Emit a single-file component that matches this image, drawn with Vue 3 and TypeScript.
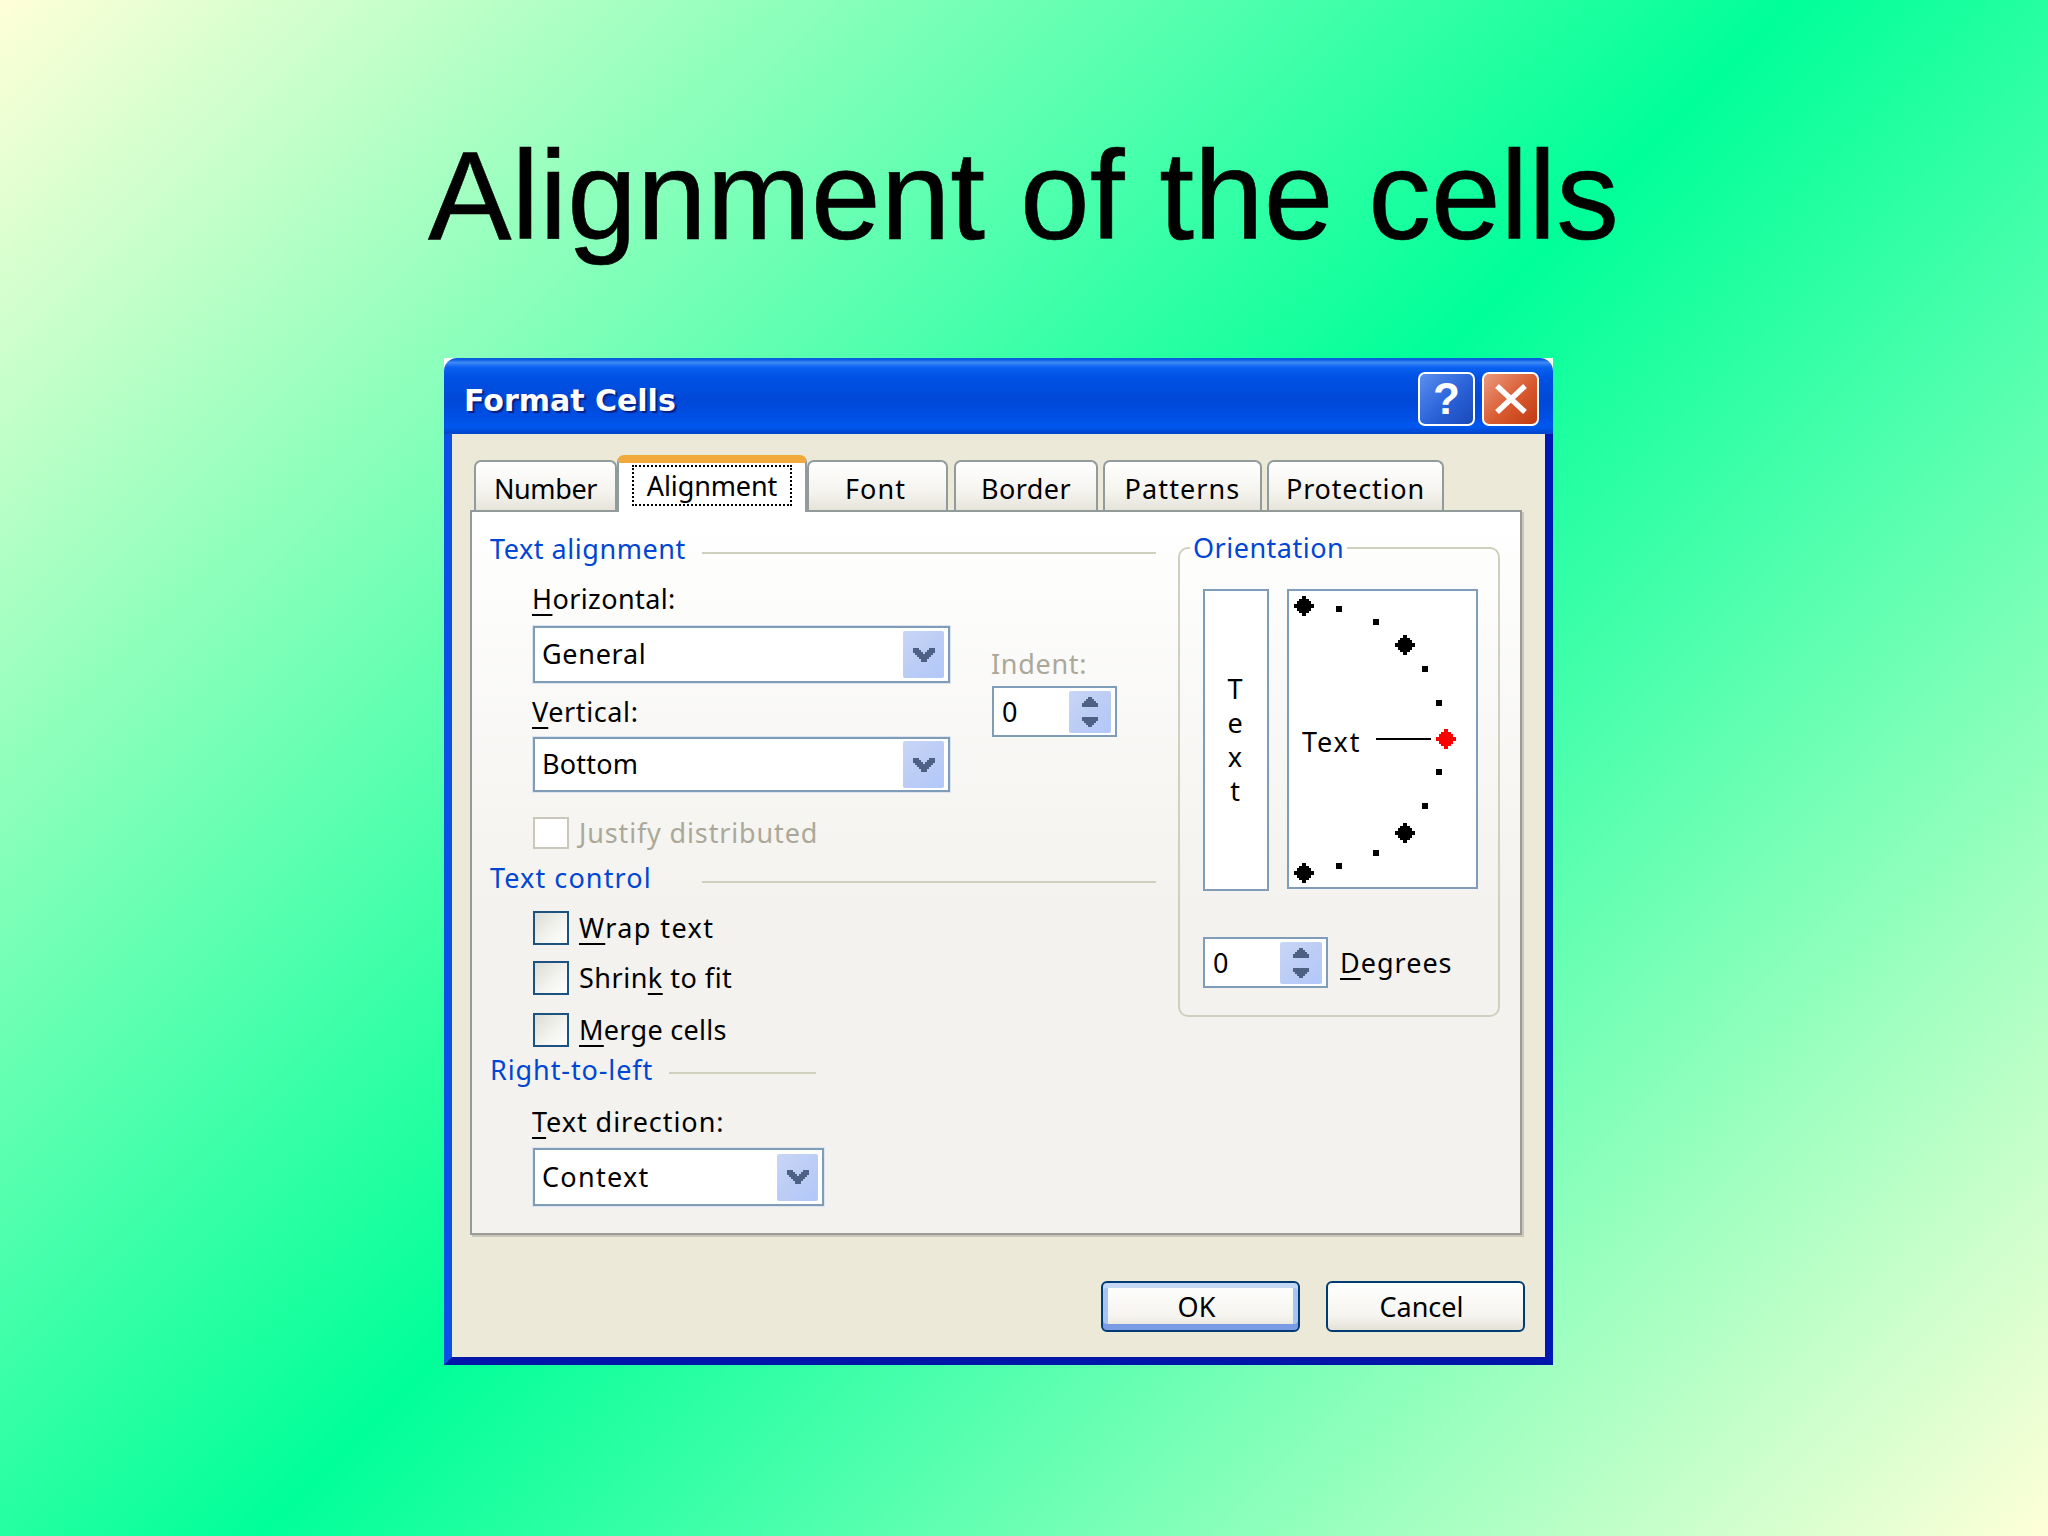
<script setup lang="ts">
interface Tab { label: string; width: number; gap: number; spacing: number; shift?: number; active?: boolean }
const tabs: Tab[] = [
  { label: 'Number', width: 143, gap: 0, spacing: -0.4 },
  { label: 'Alignment', width: 190, gap: 0, spacing: -0.1, active: true },
  { label: 'Font', width: 141, gap: 6, spacing: 1, shift: 4 },
  { label: 'Border', width: 144, gap: 5, spacing: 0.4 },
  { label: 'Patterns', width: 159, gap: 5, spacing: 1.1 },
  { label: 'Protection', width: 177, gap: 0, spacing: 0.8 },
]
const diamonds = [
  { x: 15, y: 15, fill: '#000' },
  { x: 116, y: 54, fill: '#000' },
  { x: 157, y: 148, fill: '#f00' },
  { x: 116, y: 242, fill: '#000' },
  { x: 15, y: 282, fill: '#000' },
]
const dots = [
  [50, 18], [87, 31], [136, 78], [150, 112], [150, 181], [136, 215], [87, 262], [50, 275],
]
const diamondPath = 'M-2-10H2V-7H5V-5H7V-2H10V2H7V5H5V7H2V10H-2V7H-5V5H-7V2H-10V-2H-7V-5H-5V-7H-2Z'
const chevronPath = 'M1 1H7V3H9V5H11V7H13V5H15V3H17V1H23V6H21V8H19V10H17V12H15V15H9V12H7V10H5V8H3V6H1Z'
const spinPath = 'M10 3H14V5H16V7H18V9H20V13H4V9H6V7H8V5H10ZM4 23H20V27H18V29H16V31H14V33H10V31H8V29H6V27H4Z'
const verticalText = ['T', 'e', 'x', 't']
</script>

<template>
  <div class="page">
    <h1 class="title">Alignment of the cells</h1>
    <div class="window">
      <div class="titlebar">
        <span class="caption">Format Cells</span>
        <div class="controls">
          <div class="ctl help">?</div>
          <div class="ctl close">
            <svg width="34" height="32" viewBox="0 0 34 32"><path d="M3 3 31 29M31 3 3 29" stroke="#fff" stroke-width="5.5" fill="none" /></svg>
          </div>
        </div>
      </div>
      <div class="body">
        <div class="tabs">
          <div
            v-for="t in tabs"
            :key="t.label"
            class="tab"
            :class="{ active: t.active }"
            :style="{ width: t.width + 'px', marginRight: t.gap + 'px', letterSpacing: t.spacing + 'px', paddingRight: (t.shift ?? 0) + 'px' }"
          >
            <span :class="{ focus: t.active }">{{ t.label }}</span>
          </div>
        </div>
        <div class="panel">
          <div class="left">
            <div class="section first"><span class="sec-label">Text alignment</span><span class="rule"></span></div>
            <div class="label horizontal"><u>H</u>orizontal:</div>
            <div class="align-row">
              <div class="combos">
                <div class="combo general">
                  <span class="combo-text">General</span>
                  <span class="drop"><svg width="24" height="16" viewBox="0 0 24 16"><path :d="chevronPath" fill="#4d6185" /></svg></span>
                </div>
                <div class="label vertical"><u>V</u>ertical:</div>
                <div class="combo bottom">
                  <span class="combo-text">Bottom</span>
                  <span class="drop"><svg width="24" height="16" viewBox="0 0 24 16"><path :d="chevronPath" fill="#4d6185" /></svg></span>
                </div>
              </div>
              <div class="indent">
                <div class="label disabled">Indent:</div>
                <div class="spin indent-spin">
                  <span class="spin-val">0</span>
                  <span class="spin-btn">
                    <svg width="24" height="36" viewBox="0 0 24 36"><path :d="spinPath" fill="#4d6185" /></svg>
                  </span>
                </div>
              </div>
            </div>
            <div class="check justify"><span class="box off"></span><span class="disabled">Justify distributed</span></div>
            <div class="section control"><span class="sec-label">Text control</span><span class="rule"></span></div>
            <div class="check wrap"><span class="box"></span><span><u>W</u>rap text</span></div>
            <div class="check shrink"><span class="box"></span><span>Shrin<u>k</u> to fit</span></div>
            <div class="check merge"><span class="box"></span><span><u>M</u>erge cells</span></div>
            <div class="section rtl"><span class="sec-label">Right-to-left</span><span class="rule"></span></div>
            <div class="label direction"><u>T</u>ext direction:</div>
            <div class="combo context">
              <span>Context</span>
              <span class="drop"><svg width="24" height="16" viewBox="0 0 24 16"><path :d="chevronPath" fill="#4d6185" /></svg></span>
            </div>
          </div>
          <fieldset class="orient">
            <legend class="legend">Orientation</legend>
            <div class="orient-row">
              <div class="vtext"><span v-for="(c, i) in verticalText" :key="i">{{ c }}</span></div>
              <div class="dial">
                <svg width="187" height="296" viewBox="0 0 187 296">
                  <rect v-for="(d, i) in dots" :key="i" :x="d[0] - 3" :y="d[1] - 3" width="6" height="6" fill="#000" />
                  <path v-for="(d, i) in diamonds" :key="'d' + i" :d="diamondPath" :fill="d.fill" :transform="`translate(${d.x} ${d.y})`" />
                  <line x1="87" y1="148" x2="142" y2="148" stroke="#000" stroke-width="2" />
                  <text class="dial-text" x="13" y="161">Text</text>
                </svg>
              </div>
            </div>
            <div class="degrees">
              <div class="spin deg-spin">
                <span class="spin-val">0</span>
                <span class="spin-btn">
                  <svg width="24" height="36" viewBox="0 0 24 36"><path :d="spinPath" fill="#4d6185" /></svg>
                </span>
              </div>
              <span class="deg-label"><u>D</u>egrees</span>
            </div>
          </fieldset>
        </div>
        <div class="actions">
          <div class="btn default"><span>OK</span></div>
          <div class="btn"><span>Cancel</span></div>
        </div>
      </div>
    </div>
  </div>
</template>

<style>
html, body { margin: 0; padding: 0; }
</style>

<style scoped>
.page {
  width: 2048px;
  height: 1536px;
  box-sizing: border-box;
  padding-top: 121px;
  overflow: hidden;
  background: linear-gradient(135deg, #ffffd8 0%, #00ff99 50%, #ffffd8 100%);
  font-family: "Noto Sans", "DejaVu Sans", sans-serif;
  font-size: 27px;
  line-height: 34px;
  color: #000;
}
.title {
  margin: 0 0 87px 428px;
  font-family: "Liberation Sans", Arial, sans-serif;
  font-weight: 400;
  font-size: 125.3px;
  line-height: 150px;
  white-space: nowrap;
  color: #000;
  -webkit-text-stroke: 0.6px #000;
}
.window {
  margin-left: 444px;
  width: 1109px;
  height: 1007px;
  display: flex;
  flex-direction: column;
  background: linear-gradient(#fff 0 14px, transparent 14px);
}
.titlebar {
  height: 76px;
  flex: none;
  display: flex;
  align-items: flex-start;
  justify-content: space-between;
  box-sizing: border-box;
  border-radius: 13px 13px 0 0;
  background: linear-gradient(#0a5ce0 0, #0a5ce0 2%, #3d8af7 6%, #0a62f0 12%, #0052e4 25%, #0048d8 55%, #0050e6 80%, #0058ee 90%, #0044cc 100%);
}
.caption {
  margin: 25px 0 0 20px;
  font-family: "DejaVu Sans", sans-serif;
  font-weight: 700;
  font-size: 30px;
  line-height: 36px;
  color: #fff;
  text-shadow: 2px 2px 1px #0a1f80;
}
.controls { display: flex; gap: 7px; margin: 14px 14px 0 0; }
.ctl {
  width: 57px;
  height: 54px;
  box-sizing: border-box;
  border: 2px solid #fff;
  border-radius: 7px;
  display: flex;
  align-items: center;
  justify-content: center;
  color: #fff;
}
.help {
  background: linear-gradient(135deg, #5b8ef0 0%, #2a62d8 55%, #1a48b8 100%);
  font-family: "Liberation Sans", sans-serif;
  font-weight: 700;
  font-size: 44px;
  line-height: 50px;
}
.close { background: linear-gradient(135deg, #ea9a80 0%, #d95a30 55%, #c03a10 100%); }
.body {
  flex: 1;
  display: flex;
  flex-direction: column;
  box-sizing: border-box;
  background: #ece9d8;
  border-style: solid;
  border-width: 0 8px 8px 8px;
  border-color: #0a4fe6 #0018b4 #0016a8 #0a4fe6;
  padding: 22px 0 0 18px;
}
.tabs {
  height: 56px;
  flex: none;
  display: flex;
  align-items: flex-end;
  padding-left: 4px;
  position: relative;
  z-index: 1;
  margin-bottom: -2px;
}
.tab {
  height: 50px;
  margin-bottom: 2px;
  box-sizing: border-box;
  border: 2px solid #919b9c;
  border-bottom: 0;
  border-radius: 7px 7px 0 0;
  background: linear-gradient(#fff 0%, #f5f4ef 60%, #e6e4da 100%);
  padding-top: 5px;
  display: flex;
  align-items: center;
  justify-content: center;
}
.tab.active {
  height: 57px;
  margin-bottom: 0;
  border-top: 8px solid #f2a93b;
  border-left-color: #919b9c;
  border-right-color: #919b9c;
  background: #fff;
  padding-top: 2px;
  align-items: flex-start;
}
.focus {
  display: block;
  width: 160px;
  height: 41px;
  box-sizing: border-box;
  border: 2px dotted #000;
  padding-top: 2px;
  text-align: center;
  line-height: 34px;
}
.panel {
  width: 1052px;
  height: 725px;
  flex: none;
  box-sizing: border-box;
  display: flex;
  padding-left: 18px;
  border: 2px solid #919b9c;
  border-right-color: #9a9a96;
  border-bottom-color: #9a9a96;
  background: linear-gradient(#fff 0%, #f3f2ee 55%, #f3f2ee 100%);
  box-shadow: 2px 2px 0 #c8c6b8;
}
.left { width: 666px; flex: none; }
.section { display: flex; align-items: center; height: 34px; }
.sec-label { color: #0046d5; white-space: nowrap; }
.rule { height: 2px; background: #d0d0bf; margin-top: 8px; }
.section.first { margin-top: 20px; letter-spacing: 0.55px; }
.section.first .rule { margin-left: 16px; flex: 1; }
.section.control { margin-top: 11px; letter-spacing: 1.1px; }
.section.control .rule { margin-left: auto; width: 454px; }
.section.rtl { margin-top: 6px; letter-spacing: 0.9px; }
.section.rtl .rule { margin-left: 16px; width: 147px; margin-top: 6px; }
.label { margin-left: 42px; white-space: nowrap; }
u { text-decoration-thickness: 2px; text-underline-offset: 5px; text-decoration-skip-ink: none; }
.label.horizontal { margin-top: 16px; letter-spacing: 0.4px; }
.label.vertical { margin-top: 12px; margin-bottom: 8px; letter-spacing: 0.6px; }
.label.direction { margin-top: 18px; letter-spacing: 0.95px; }
.align-row { display: flex; margin-top: 10px; }
.combos { width: 459px; flex: none; }
.combo {
  margin-left: 43px;
  box-sizing: border-box;
  background: #fff;
  border: 2px solid #7f9db9;
  outline: 1px solid #dce4ee;
  display: flex;
  align-items: center;
  justify-content: space-between;
  padding: 0 4px 0 7px;
}
.combo-text { margin-bottom: 2px; }
.combo.general { width: 417px; height: 57px; letter-spacing: 0.7px; }
.combo.bottom { width: 417px; height: 55px; letter-spacing: 0.2px; }
.combo.context { width: 291px; height: 58px; margin-top: 9px; letter-spacing: 1.3px; }
.drop {
  width: 41px;
  height: 47px;
  border-radius: 2px;
  display: flex;
  align-items: center;
  justify-content: center;
  background: linear-gradient(135deg, #c8d6f6 0%, #bccdf5 50%, #b2c8fb 100%);
}
.indent { margin-top: 21px; margin-left: 42px; }
.indent .label { margin-left: 0; letter-spacing: 0.7px; }
.disabled { color: #aca899; }
.spin {
  box-sizing: border-box;
  border: 2px solid #7f9db9;
  background: #fff;
  display: flex;
  align-items: center;
  justify-content: space-between;
  padding-right: 4px;
}
.spin-val { padding-left: 8px; }
.indent-spin { width: 125px; height: 51px; margin-top: 5px; margin-left: 1px; }
.deg-spin { width: 125px; height: 51px; }
.spin-btn {
  width: 42px;
  height: 42px;
  border-radius: 2px;
  display: flex;
  align-items: center;
  justify-content: center;
  background: linear-gradient(135deg, #c8d6f6 0%, #bccdf5 50%, #b2c8fb 100%);
}
.check { display: flex; align-items: center; height: 34px; margin-left: 43px; }
.box {
  width: 36px;
  height: 34px;
  flex: none;
  box-sizing: border-box;
  margin-right: 10px;
  border: 2px solid #1c5180;
  background: linear-gradient(135deg, #dcdcd7 0%, #f4f4f0 60%, #fff 100%);
}
.box.off { border-color: #cac8bb; background: #fff; height: 32px; }
.check.justify { margin-top: 24px; letter-spacing: 0.85px; }
.check.wrap { margin-top: 16px; letter-spacing: 1.4px; }
.check.shrink { margin-top: 16px; letter-spacing: 0.5px; }
.check.merge { margin-top: 18px; letter-spacing: 0.3px; }
.orient {
  margin: 19px 0 0 22px;
  padding: 0 0 0 23px;
  width: 322px;
  height: 486px;
  box-sizing: border-box;
  border: 2px solid #d0d0bf;
  border-radius: 10px;
  min-width: 0;
}
.legend { padding: 0 3px; margin-left: -13px; color: #0046d5; line-height: 34px; letter-spacing: 0.5px; }
.orient-row { display: flex; gap: 18px; margin-top: 24px; align-items: flex-start; }
.vtext {
  width: 66px;
  height: 302px;
  box-sizing: border-box;
  border: 2px solid #7f9db9;
  background: #fff;
  display: flex;
  flex-direction: column;
  align-items: center;
  justify-content: center;
  padding-right: 2px;
}
.vtext span { display: block; height: 34px; }
.dial {
  width: 191px;
  height: 300px;
  box-sizing: border-box;
  border: 2px solid #7f9db9;
  background: #fff;
}
.dial svg { display: block; }
.dial-text { font-family: "Noto Sans", sans-serif; font-size: 27px; fill: #000; letter-spacing: 1.9px; }
.degrees { display: flex; align-items: center; gap: 12px; margin-top: 46px; }
.deg-label { white-space: nowrap; letter-spacing: 1px; }
.actions {
  display: flex;
  justify-content: flex-end;
  gap: 26px;
  margin-top: 46px;
  padding-right: 20px;
}
.btn {
  width: 199px;
  height: 51px;
  box-sizing: border-box;
  border: 2px solid #003c74;
  border-radius: 6px;
  background: linear-gradient(#fff 0%, #f5f4ef 70%, #e4e2d6 100%);
  display: flex;
  align-items: center;
  justify-content: center;
  padding-right: 8px;
}
.btn.default {
  box-shadow: inset 0 5px 0 #c4d8f6, inset 0 -6px 0 #7a9ce4, inset 5px 0 0 #a9c4ef, inset -5px 0 0 #a9c4ef;
}
</style>
